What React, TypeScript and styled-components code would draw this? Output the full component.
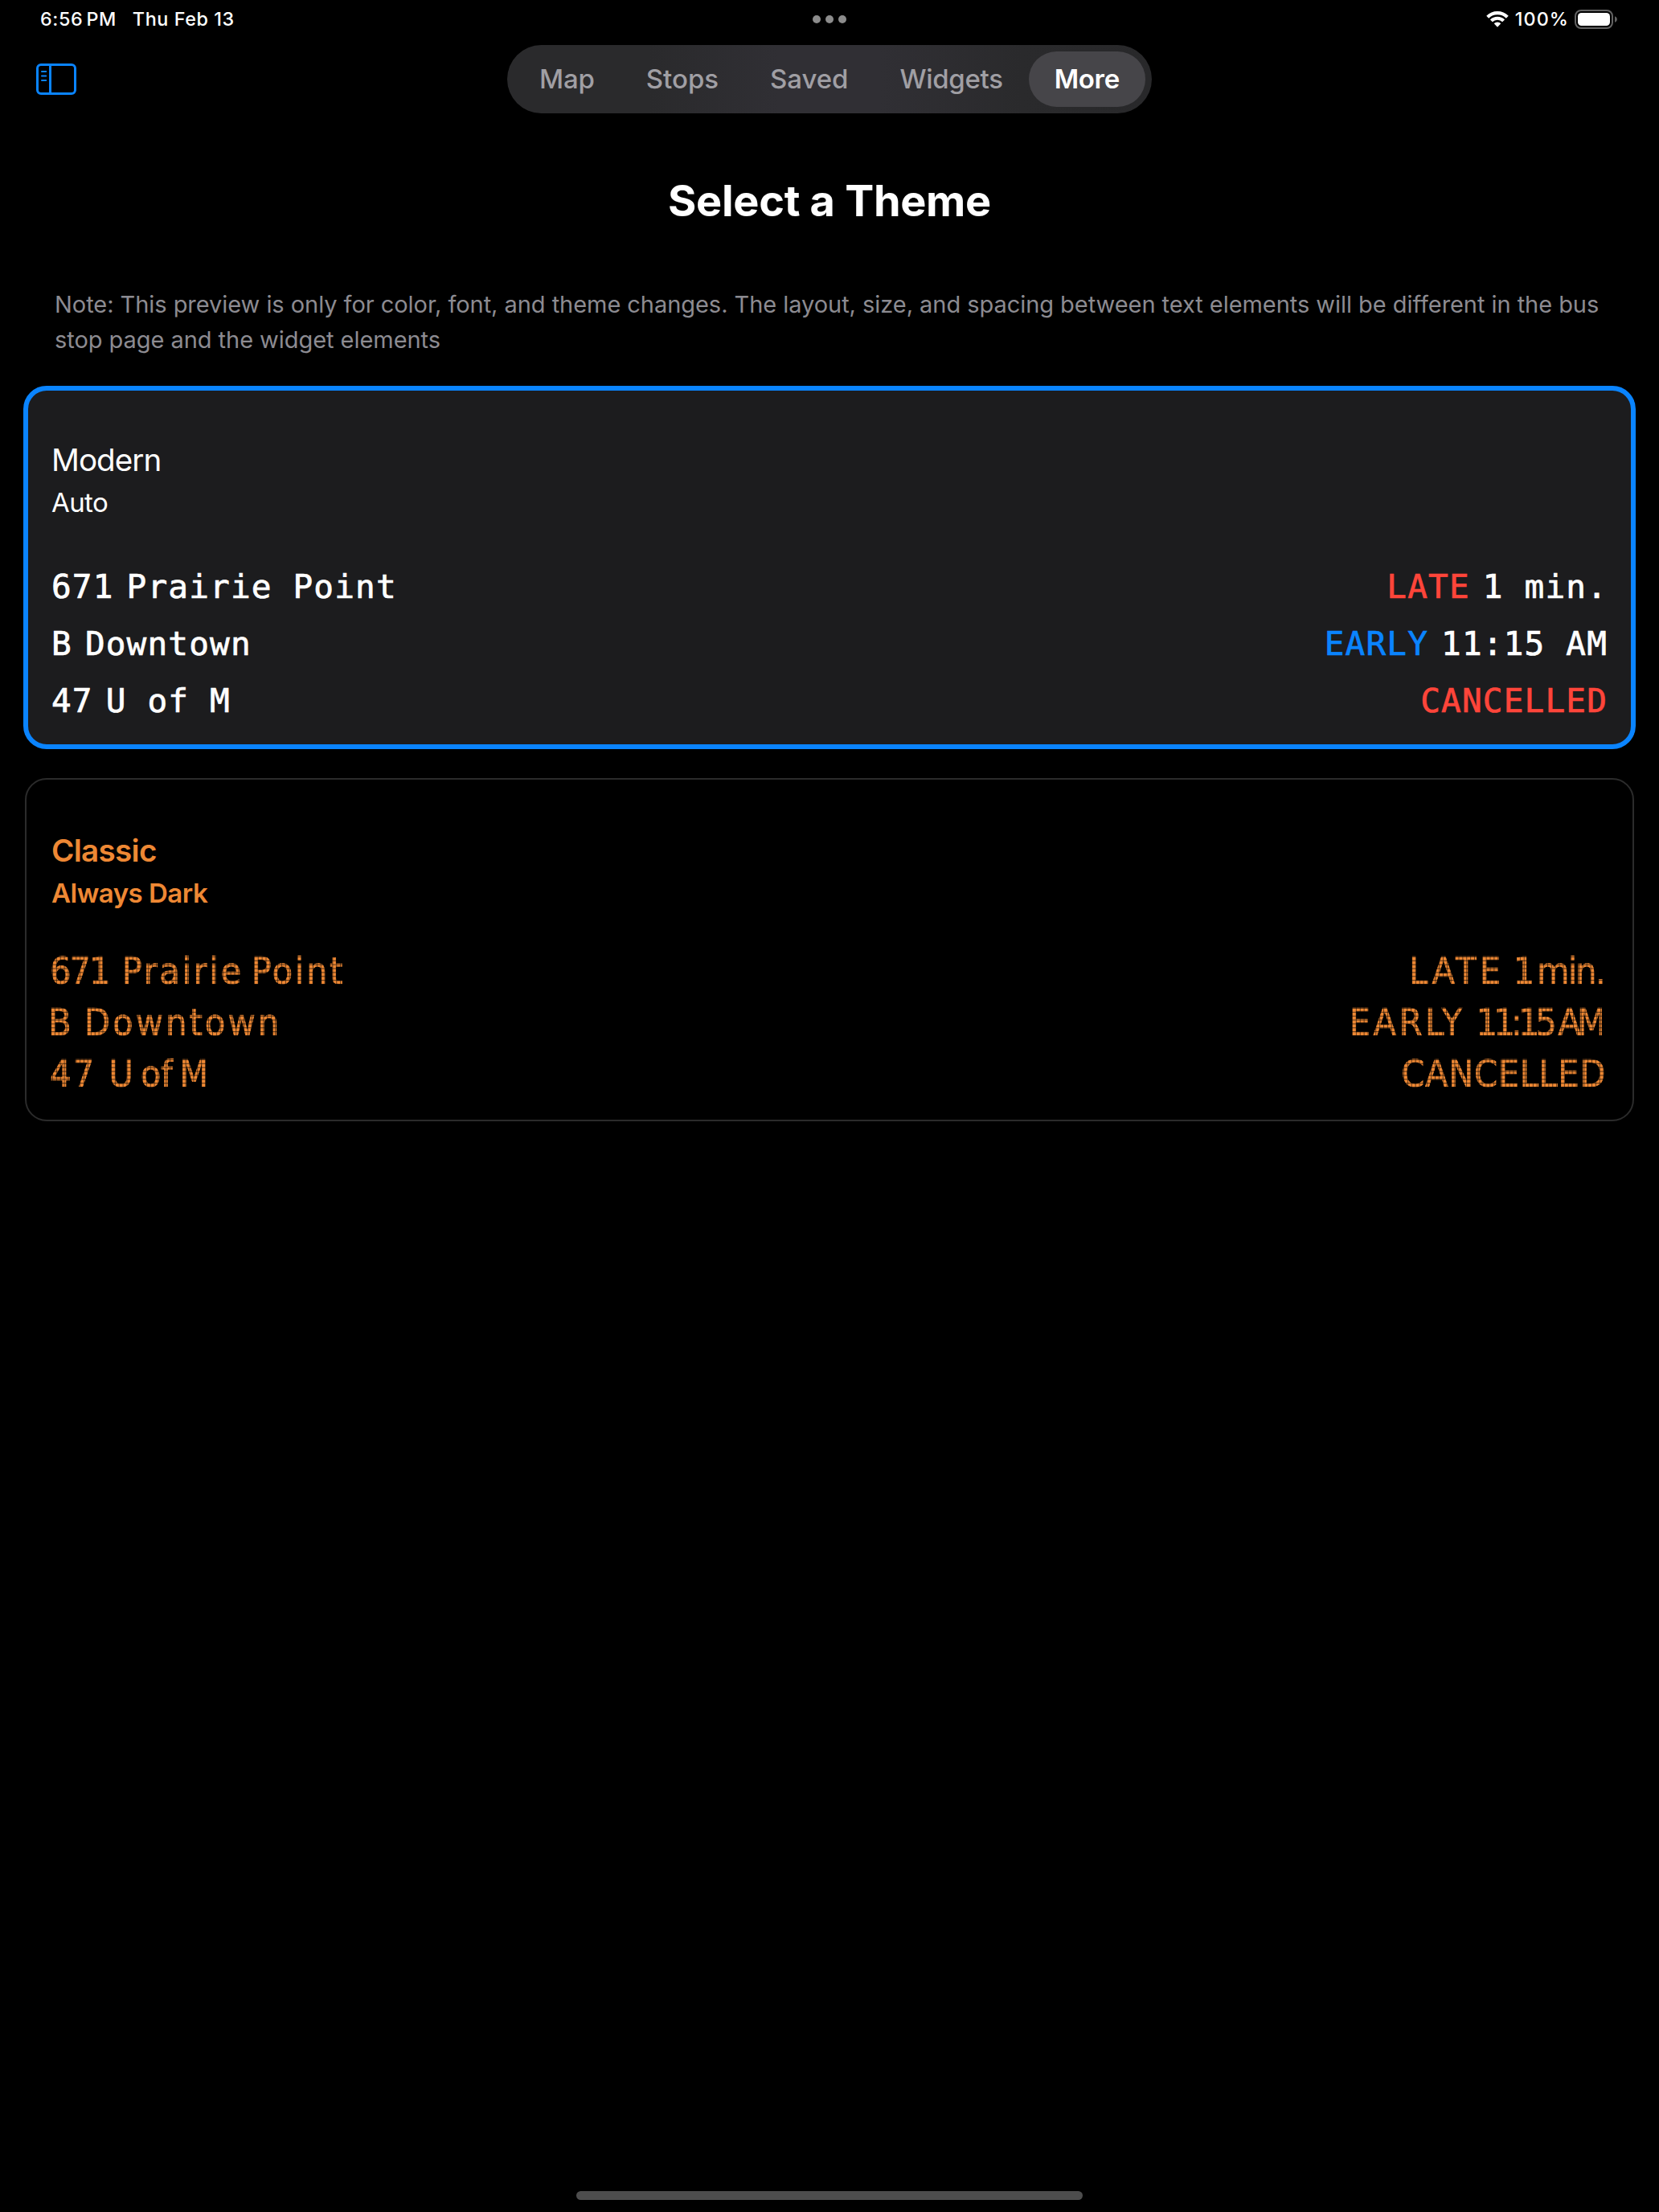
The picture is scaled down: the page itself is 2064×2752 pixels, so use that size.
import React from 'react';
import styled, { createGlobalStyle, css } from 'styled-components';

const GlobalStyle = createGlobalStyle`
  * { box-sizing: border-box; }
  body {
    margin: 0;
    background: #000;
    color: #fff;
    font-family: Inter, "Liberation Sans", sans-serif;
  }
`;

const Screen = styled.div`
  display: flex;
  flex-direction: column;
  min-height: 2752px;
`;

const StatusBar = styled.header`
  display: grid;
  grid-template-columns: 1fr auto 1fr;
  align-items: center;
  height: 47px;
  padding: 0 50px;
  font-size: 23.3px;
  font-weight: 500;
  letter-spacing: 0.6px;
`;

const StatusGroup = styled.div<{ $end?: boolean }>`
  display: flex;
  align-items: center;
  justify-content: ${(p) => (p.$end ? 'flex-end' : 'flex-start')};
  gap: ${(p) => (p.$end ? 7 : 20)}px;
  padding-right: ${(p) => (p.$end ? 2 : 0)}px;
`;

const Time = styled.span`
  word-spacing: -2.6px;
`;

const Charge = styled.span`
  letter-spacing: 1.08px;
`;

const Multitask = styled.div`
  display: flex;
  gap: 6px;
`;

const Dot = styled.i`
  width: 10px;
  height: 10px;
  border-radius: 50%;
  background: #8c8c8c;
`;

const NavBar = styled.nav`
  display: grid;
  grid-template-columns: 1fr auto 1fr;
  align-items: center;
  margin-top: 9px;
  padding: 0 45px;
`;

const SidebarButton = styled.button`
  display: flex;
  justify-self: start;
  padding: 0;
  border: 0;
  background: none;
  color: #0a84ff;
`;

const TabPill = styled.div`
  display: flex;
  height: 85px;
  padding: 8px;
  border-radius: 43px;
  background: linear-gradient(90deg, #2a2a2c 0%, #2a2a2c 22%, #302f34 42%, #302f34 58%, #2a2a2c 80%, #28282a 100%);
`;

const Tab = styled.button<{ $active?: boolean; $track?: number }>`
  height: 69px;
  padding: 0 32px;
  border: 0;
  border-radius: 35px;
  background: ${(p) => (p.$active ? '#464549' : 'transparent')};
  color: ${(p) => (p.$active ? '#fff' : '#a09fa4')};
  font: ${(p) => (p.$active ? 600 : 500)} 33px/69px Inter, sans-serif;
  letter-spacing: ${(p) => p.$track ?? 0}px;
`;

const Title = styled.h1`
  margin: 76px 0 0;
  font-size: 54px;
  font-weight: 700;
  line-height: 66px;
  letter-spacing: -0.3px;
  text-align: center;
`;

const Note = styled.p`
  margin: 74px 66px 0 68px;
  color: #8c8b91;
  font-size: 29px;
  line-height: 44px;
  letter-spacing: -0.05px;
`;

const ThemeList = styled.main`
  display: flex;
  flex-direction: column;
  gap: 36px;
  margin-top: 35px;
`;

const Card = styled.section<{ $selected?: boolean }>`
  border-style: solid;
  ${(p) =>
    p.$selected
      ? css`
          margin: 0 29px;
          padding: 62px 29px 18px;
          border-width: 6px;
          border-color: #0a84ff;
          border-radius: 29px;
          background: #1c1c1e;
        `
      : css`
          margin: 0 31px;
          padding: 64px 31px 25px;
          border-width: 2px;
          border-color: #2b2b2b;
          border-radius: 27px;
          color: #ee8834;
        `}
`;

const ThemeName = styled.h2<{ $strong?: boolean }>`
  margin: 0;
  font-size: 38.6px;
  font-weight: ${(p) => (p.$strong ? 600 : 400)};
  line-height: 48px;
  letter-spacing: ${(p) => (p.$strong ? -0.7 : -0.95)}px;
`;

const ThemeMode = styled.p<{ $strong?: boolean }>`
  margin: 8px 0 0;
  font-size: 33px;
  font-weight: ${(p) => (p.$strong ? 600 : 400)};
  line-height: 42px;
  letter-spacing: ${(p) => (p.$strong ? -0.5 : -0.6)}px;
`;

const Board = styled.div<{ $classic?: boolean }>`
  margin-top: ${(p) => (p.$classic ? 44 : 49)}px;
  ${(p) =>
    p.$classic
      ? css`
          font: 46.6px/64px "DejaVu Sans Condensed", "DejaVu Sans", sans-serif;
          -webkit-text-stroke: 0.7px currentColor;
        `
      : css`
          font: 41px/71px "DejaVu Sans Mono", monospace;
          letter-spacing: 1.18px;
          -webkit-text-stroke: 0.7px currentColor;
        `}
`;

const Departure = styled.div`
  display: flex;
  justify-content: space-between;
`;

const Side = styled.div`
  display: flex;
  gap: 16px;
  white-space: pre;
`;

const Label = styled.span<{ $tone?: string }>`
  color: ${(p) => p.$tone ?? 'inherit'};
`;

interface LedProps {
  $track?: number;
  $word?: number;
  $before?: number;
  $after?: number;
}

/* Sign lettering: a fine grid is masked out of the glyphs so they read as lamps. */
const Led = styled.span<LedProps>`
  height: 64px;
  margin-left: ${(p) => p.$before ?? 0}px;
  margin-right: ${(p) => p.$after ?? 0}px;
  letter-spacing: ${(p) => p.$track ?? 0}px;
  word-spacing: ${(p) => p.$word ?? 0}px;
  mask-image:
    linear-gradient(to bottom, rgba(0, 0, 0, 0.35) 0.95px, #000 0.95px),
    linear-gradient(to right, rgba(0, 0, 0, 0.45) 0.95px, #000 0.95px);
  mask-size: 100% 4.88px, 4.88px 100%;
  mask-position: 0 4.18px, 3px 0;
  mask-repeat: repeat;
  mask-composite: intersect;
`;

const HomeIndicator = styled.div`
  width: 630px;
  height: 11px;
  margin: auto auto 15px;
  border-radius: 6px;
  background: #4d4d4d;
`;

const WifiIcon = () => (
  <svg width="29" height="20" viewBox="0 0 29 20" fill="none" stroke="#fff">
    <path d="M1.7 7.2A17.4 17.4 0 0 1 26.3 7.2" strokeWidth="4.1" />
    <path d="M6.4 11.9A10.7 10.7 0 0 1 21.6 11.9" strokeWidth="4.1" />
    <path d="M9.7 15.2A6.1 6.1 0 0 1 18.3 15.2L14 19.8Z" fill="#fff" stroke="none" />
  </svg>
);

const BatteryIcon = () => (
  <svg width="53" height="24" viewBox="0 0 53 24">
    <rect x="1" y="1" width="46" height="22" rx="7" fill="none" stroke="#636363" strokeWidth="2" />
    <rect x="4" y="4" width="40" height="16" rx="4.5" fill="#fff" />
    <path d="M50 8.2C53.8 9.6 53.8 14.4 50 15.8Z" fill="#636363" />
  </svg>
);

const SidebarIcon = () => (
  <svg width="50" height="39" viewBox="0 0 50 39" fill="none" stroke="currentColor">
    <rect x="1.5" y="1.5" width="47" height="36" rx="4.5" strokeWidth="3" />
    <path d="M17.5 1.5V37.5" strokeWidth="3" />
    <path d="M7 10H12.2M7 15.5H12.2M7 21H12.2" strokeWidth="2" strokeLinecap="round" />
  </svg>
);

const tabs: { name: string; track: number; active?: boolean }[] = [
  { name: 'Map', track: -0.2 },
  { name: 'Stops', track: 0 },
  { name: 'Saved', track: -0.07 },
  { name: 'Widgets', track: -0.3 },
  { name: 'More', track: -0.3, active: true },
];

const RED = '#ff453a';
const BLUE = '#0a84ff';

export default function App() {
  return (
    <Screen>
      <GlobalStyle />
      <StatusBar>
        <StatusGroup>
          <Time>6:56 PM</Time>
          <span>Thu Feb 13</span>
        </StatusGroup>
        <Multitask>
          <Dot />
          <Dot />
          <Dot />
        </Multitask>
        <StatusGroup $end>
          <WifiIcon />
          <Charge>100%</Charge>
          <BatteryIcon />
        </StatusGroup>
      </StatusBar>

      <NavBar>
        <SidebarButton aria-label="Sidebar">
          <SidebarIcon />
        </SidebarButton>
        <TabPill>
          {tabs.map((t) => (
            <Tab key={t.name} $active={t.active} $track={t.track}>
              {t.name}
            </Tab>
          ))}
        </TabPill>
      </NavBar>

      <Title>Select a Theme</Title>
      <Note>
        Note: This preview is only for color, font, and theme changes. The layout, size, and spacing
        between text elements will be different in the bus stop page and the widget elements
      </Note>

      <ThemeList>
        <Card $selected>
          <ThemeName>Modern</ThemeName>
          <ThemeMode>Auto</ThemeMode>
          <Board>
            <Departure>
              <Side>
                <Label>671</Label>
                <Label>Prairie Point</Label>
              </Side>
              <Side>
                <Label $tone={RED}>LATE</Label>
                <Label>1 min.</Label>
              </Side>
            </Departure>
            <Departure>
              <Side>
                <Label>B</Label>
                <Label>Downtown</Label>
              </Side>
              <Side>
                <Label $tone={BLUE}>EARLY</Label>
                <Label>11:15 AM</Label>
              </Side>
            </Departure>
            <Departure>
              <Side>
                <Label>47</Label>
                <Label>U of M</Label>
              </Side>
              <Side>
                <Label $tone={RED}>CANCELLED</Label>
              </Side>
            </Departure>
          </Board>
        </Card>

        <Card>
          <ThemeName $strong>Classic</ThemeName>
          <ThemeMode $strong>Always Dark</ThemeMode>
          <Board $classic>
            <Departure>
              <Side>
                <Led $track={-2.16} $before={-2}>671</Led>
                <Led $track={2.5} $word={-6}>Prairie Point</Led>
              </Side>
              <Side>
                <Led $track={4.3} $after={-5}>LATE</Led>
                <Led $track={-2} $word={-7} $after={4}>1 min.</Led>
              </Side>
            </Departure>
            <Departure>
              <Side>
                <Led $before={-4}>B</Led>
                <Led $track={2.98}>Downtown</Led>
              </Side>
              <Side>
                <Led $track={3.4} $after={-2}>EARLY</Led>
                <Led $track={-5.1} $word={-1.7} $after={7}>11:15 AM</Led>
              </Side>
            </Departure>
            <Departure>
              <Side>
                <Led $track={2} $before={-2}>47</Led>
                <Led $track={-0.34} $word={-4}>U of M</Led>
              </Side>
              <Side>
                <Led $track={0.47} $after={2}>CANCELLED</Led>
              </Side>
            </Departure>
          </Board>
        </Card>
      </ThemeList>

      <HomeIndicator />
    </Screen>
  );
}
